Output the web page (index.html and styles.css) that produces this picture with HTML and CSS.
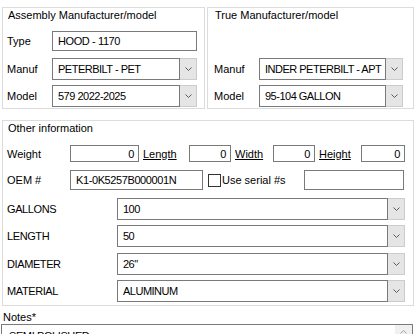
FILE: index.html
```html
<!DOCTYPE html>
<html lang="en">
<head>
  <meta charset="UTF-8" />
  <title>Assembly details</title>
  <link rel="stylesheet" href="styles.css">
</head>
<body>
  <div class="top">
    <div class="group g-assembly">
      <div class="group-title">Assembly Manufacturer/model</div>
      <div class="row row-type">
        <span class="lbl">Type</span>
        <div class="text w145">HOOD - 1170</div>
      </div>
      <div class="row row-manuf">
        <span class="lbl">Manuf</span>
        <div class="combo w145">
          <span class="combo-val">PETERBILT - PET</span>
          <span class="combo-btn"><svg width="7" height="4" viewBox="0 0 7 4"><polyline points="0.5,0.5 3.5,3.5 6.5,0.5" /></svg></span>
        </div>
      </div>
      <div class="row row-model">
        <span class="lbl">Model</span>
        <div class="combo w145">
          <span class="combo-val">579 2022-2025</span>
          <span class="combo-btn"><svg width="7" height="4" viewBox="0 0 7 4"><polyline points="0.5,0.5 3.5,3.5 6.5,0.5" /></svg></span>
        </div>
      </div>
    </div>

    <div class="group g-true">
      <div class="group-title">True Manufacturer/model</div>
      <div class="row row-manuf-true">
        <span class="lbl">Manuf</span>
        <div class="combo w144">
          <span class="combo-val">INDER PETERBILT - APT</span>
          <span class="combo-btn"><svg width="7" height="4" viewBox="0 0 7 4"><polyline points="0.5,0.5 3.5,3.5 6.5,0.5" /></svg></span>
        </div>
      </div>
      <div class="row row-model">
        <span class="lbl">Model</span>
        <div class="combo w144">
          <span class="combo-val">95-104 GALLON</span>
          <span class="combo-btn"><svg width="7" height="4" viewBox="0 0 7 4"><polyline points="0.5,0.5 3.5,3.5 6.5,0.5" /></svg></span>
        </div>
      </div>
    </div>
  </div>

  <div class="group g-other">
    <div class="group-title">Other information</div>

    <div class="row row-dims">
      <span class="lbl lbl-wide">Weight</span>
      <div class="num w69">0</div>
      <span class="link lbl-length">Length</span>
      <div class="num w42">0</div>
      <span class="link lbl-width">Width</span>
      <div class="num w42">0</div>
      <span class="link lbl-height">Height</span>
      <div class="num w44">0</div>
    </div>

    <div class="row row-oem">
      <span class="lbl lbl-wide">OEM #</span>
      <div class="text w133">K1-0K5257B000001N</div>
      <span class="check"></span>
      <span class="check-lbl">Use serial #s</span>
      <div class="text w100"></div>
    </div>

    <div class="row row-attr first">
      <span class="lbl lbl-attr">GALLONS</span>
      <div class="combo w288">
        <span class="combo-val">100</span>
        <span class="combo-btn"><svg width="7" height="4" viewBox="0 0 7 4"><polyline points="0.5,0.5 3.5,3.5 6.5,0.5" /></svg></span>
      </div>
    </div>
    <div class="row row-attr">
      <span class="lbl lbl-attr">LENGTH</span>
      <div class="combo w288">
        <span class="combo-val">50</span>
        <span class="combo-btn"><svg width="7" height="4" viewBox="0 0 7 4"><polyline points="0.5,0.5 3.5,3.5 6.5,0.5" /></svg></span>
      </div>
    </div>
    <div class="row row-attr wide-gap">
      <span class="lbl lbl-attr">DIAMETER</span>
      <div class="combo w288">
        <span class="combo-val">26"</span>
        <span class="combo-btn"><svg width="7" height="4" viewBox="0 0 7 4"><polyline points="0.5,0.5 3.5,3.5 6.5,0.5" /></svg></span>
      </div>
    </div>
    <div class="row row-attr">
      <span class="lbl lbl-attr">MATERIAL</span>
      <div class="combo w288">
        <span class="combo-val">ALUMINUM</span>
        <span class="combo-btn"><svg width="7" height="4" viewBox="0 0 7 4"><polyline points="0.5,0.5 3.5,3.5 6.5,0.5" /></svg></span>
      </div>
    </div>
  </div>

  <div class="notes">
    <div class="notes-lbl">Notes*</div>
    <div class="notes-box">
      <span class="notes-text">SEMI POLISHED</span>
      <span class="scroll"><svg width="7" height="4" viewBox="0 0 7 4"><polyline points="0.5,3.5 3.5,0.5 6.5,3.5" /></svg></span>
    </div>
  </div>
</body>
</html>
```

FILE: styles.css
```css
:root {
  --line: #dcdcdc;
  --field: #7a7a7a;
  --btn: #e5e5e5;
  --btn-line: #cccccc;
  --font: 'Liberation Sans', Arial, sans-serif;
}

html {
  overflow: hidden;
}

body {
  margin: 0;
  width: 416px;
  background: #ffffff;
  color: #000000;
  font-family: var(--font);
  font-size: 11px;
  line-height: 14px;
}

.top {
  display: flex;
  gap: 2px;
  margin-left: 2px;
  padding-top: 7px;
}

.group {
  border: 1px solid var(--line);
  box-sizing: border-box;
}

.group-title {
  display: inline-block;
  margin-top: -7px;
  padding: 0 1px;
  background: #ffffff;
  height: 14px;
  position: relative;
}

.g-assembly {
  width: 203px;
  height: 102px;
  padding-left: 4px;
}

.g-true {
  width: 207px;
  height: 102px;
  padding-left: 6px;
}

.g-assembly .group-title {
  left: 0;
}

.g-true .group-title {
  left: 0;
}

.row {
  display: flex;
  align-items: center;
}

.lbl {
  width: 45px;
  flex: none;
}

.row-type {
  margin-top: 9px;
  height: 20px;
}

.row-manuf {
  margin-top: 7px;
  height: 22px;
}

.row-model {
  margin-top: 5px;
  height: 22px;
}

.row-manuf-true {
  margin-top: 36px;
  height: 22px;
}

/* fields */
.text, .num {
  box-sizing: border-box;
  height: 20px;
  border: 1px solid var(--field);
  padding: 0 5px;
  display: flex;
  align-items: center;
  white-space: nowrap;
  overflow: hidden;
  flex: none;
  letter-spacing: -0.4px;
}

.num {
  justify-content: flex-end;
  padding: 0 4px;
  height: 17px;
}

.combo {
  display: flex;
  height: 22px;
  flex: none;
}

.combo-val {
  flex: 1;
  border: 1px solid var(--field);
  padding: 0 5px;
  display: flex;
  align-items: center;
  white-space: nowrap;
  overflow: hidden;
  letter-spacing: -0.5px;
}

.combo-btn {
  width: 17px;
  flex: none;
  box-sizing: border-box;
  background: var(--btn);
  border: 1px solid var(--btn-line);
  border-left: none;
  display: flex;
  align-items: center;
  justify-content: center;
}

.combo-btn svg, .scroll svg {
  fill: none;
  stroke: #5a5a5a;
  stroke-width: 1;
}

.w145 { width: 145px; }
.w144 { width: 144px; }
.w133 { width: 133px; }
.w100 { width: 100px; }
.w69 { width: 69px; }
.w42 { width: 42px; }
.w44 { width: 44px; }
.w288 { width: 288px; }

/* other information */
.g-other {
  width: 412px;
  height: 186px;
  margin: 11px 0 0 2px;
  padding-left: 4px;
}

.lbl-wide {
  width: 63px;
}

.row-dims {
  margin-top: 10px;
  height: 17px;
}

.link {
  text-decoration: underline;
  flex: none;
  margin-left: 4px;
}

.lbl-length { width: 46px; }
.lbl-width { width: 38px; }
.lbl-height { width: 42px; }

.row-oem {
  margin-top: 8px;
  height: 20px;
}

.check {
  width: 13px;
  height: 13px;
  box-sizing: border-box;
  border: 1px solid #333333;
  margin-left: 5px;
  flex: none;
}

.check-lbl {
  width: 82px;
  margin-left: 1px;
  flex: none;
}

.lbl-attr {
  width: 110px;
  letter-spacing: -0.4px;
}

.row-attr {
  margin-top: 5px;
  height: 22px;
}

.row-attr.first {
  margin-top: 8px;
}

.row-attr.wide-gap {
  margin-top: 6px;
}

/* notes */
.notes {
  margin-top: 4px;
  padding-left: 1px;
}

.notes-lbl {
  padding-left: 2px;
  height: 14px;
}

.notes-box {
  width: 412px;
  height: 40px;
  box-sizing: border-box;
  border: 1px solid var(--field);
  display: flex;
  justify-content: space-between;
}

.notes-text {
  padding: 4px 0 0 7px;
  letter-spacing: -0.4px;
}

.scroll {
  width: 17px;
  background: #f0f0f0;
  display: flex;
  justify-content: center;
  padding-top: 5px;
  box-sizing: border-box;
}

.scroll svg {
  stroke: #a0a0a0;
}
```
